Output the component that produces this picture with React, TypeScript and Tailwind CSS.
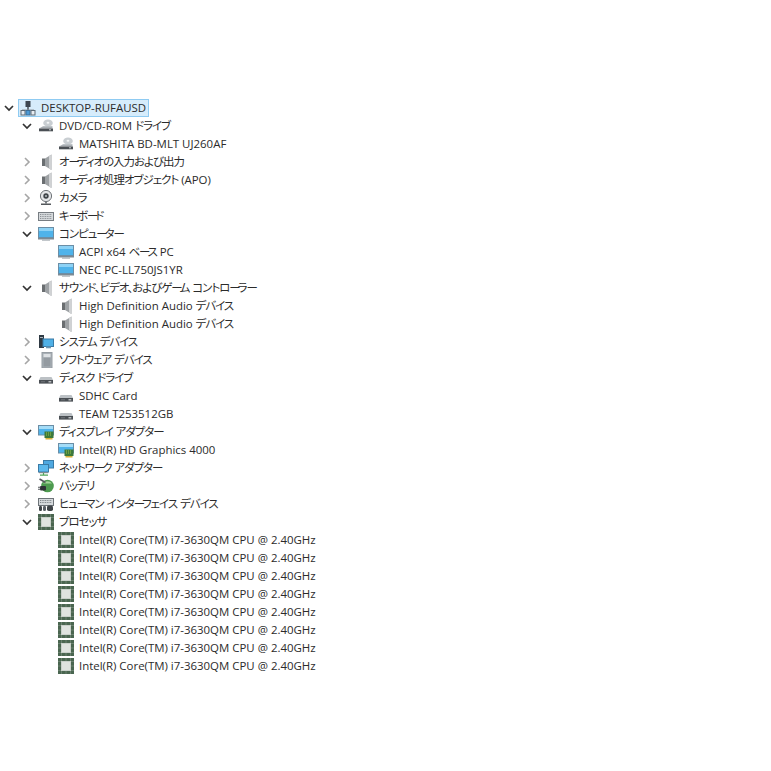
import type { ReactNode } from "react";

type IconName =
  | "computer"
  | "dvd"
  | "speaker"
  | "camera"
  | "keyboard"
  | "monitor"
  | "system"
  | "tower"
  | "disk"
  | "display"
  | "network"
  | "battery"
  | "hid"
  | "cpu";

type Row = {
  label: string;
  level: 0 | 1 | 2;
  icon: IconName;
  chevron?: "open" | "closed";
};

const cpuName = "Intel(R) Core(TM) i7-3630QM CPU @ 2.40GHz";

const rows: Row[] = [
  { label: "DVD/CD-ROM ドライブ", level: 1, icon: "dvd", chevron: "open" },
  { label: "MATSHITA BD-MLT UJ260AF", level: 2, icon: "dvd" },
  { label: "オーディオの入力および出力", level: 1, icon: "speaker", chevron: "closed" },
  { label: "オーディオ処理オブジェクト (APO)", level: 1, icon: "speaker", chevron: "closed" },
  { label: "カメラ", level: 1, icon: "camera", chevron: "closed" },
  { label: "キーボード", level: 1, icon: "keyboard", chevron: "closed" },
  { label: "コンピューター", level: 1, icon: "monitor", chevron: "open" },
  { label: "ACPI x64 ベース PC", level: 2, icon: "monitor" },
  { label: "NEC PC-LL750JS1YR", level: 2, icon: "monitor" },
  { label: "サウンド、ビデオ、およびゲーム コントローラー", level: 1, icon: "speaker", chevron: "open" },
  { label: "High Definition Audio デバイス", level: 2, icon: "speaker" },
  { label: "High Definition Audio デバイス", level: 2, icon: "speaker" },
  { label: "システム デバイス", level: 1, icon: "system", chevron: "closed" },
  { label: "ソフトウェア デバイス", level: 1, icon: "tower", chevron: "closed" },
  { label: "ディスク ドライブ", level: 1, icon: "disk", chevron: "open" },
  { label: "SDHC Card", level: 2, icon: "disk" },
  { label: "TEAM T253512GB", level: 2, icon: "disk" },
  { label: "ディスプレイ アダプター", level: 1, icon: "display", chevron: "open" },
  { label: "Intel(R) HD Graphics 4000", level: 2, icon: "display" },
  { label: "ネットワーク アダプター", level: 1, icon: "network", chevron: "closed" },
  { label: "バッテリ", level: 1, icon: "battery", chevron: "closed" },
  { label: "ヒューマン インターフェイス デバイス", level: 1, icon: "hid", chevron: "closed" },
  { label: "プロセッサ", level: 1, icon: "cpu", chevron: "open" },
  ...Array.from({ length: 8 }, (): Row => ({ label: cpuName, level: 2, icon: "cpu" })),
];

const glyphs: Record<IconName, ReactNode> = {
  computer: (
    <>
      <rect x="5.5" y="1" width="5" height="6" fill="#3d4650" />
      <rect x="7" y="7" width="2" height="3" fill="#6b7680" />
      <rect x="2" y="9.5" width="12" height="1.2" fill="#8d969e" />
      <rect x="1" y="10.5" width="4" height="4.5" fill="#e8edf2" stroke="#5d6a76" strokeWidth="1" />
      <rect x="6" y="10.5" width="4" height="4.5" fill="#4d9ad6" stroke="#3a6f9a" strokeWidth="1" />
      <rect x="11" y="10.5" width="4" height="4.5" fill="#e8edf2" stroke="#5d6a76" strokeWidth="1" />
    </>
  ),
  dvd: (
    <>
      <ellipse cx="10" cy="5" rx="4.8" ry="3.6" fill="#c9ced2" />
      <ellipse cx="10" cy="4.8" rx="1.4" ry="1" fill="#f4f6f7" />
      <path d="M1 10.5 L5 8.2 H14.5 V10.5 Z" fill="#a9afb4" />
      <rect x="1" y="10.5" width="14" height="2.8" fill="#4a4f54" />
      <rect x="11" y="11.3" width="2" height="1" fill="#c8ccd0" />
    </>
  ),
  speaker: (
    <>
      <rect x="4" y="4.5" width="3.2" height="7.5" fill="#6a6e71" />
      <path d="M7 4.5 L13.5 0.5 V16 L7 12 Z" fill="#9ea2a5" />
      <path d="M11 2 L13.5 0.5 V16 L11 14.5 Z" fill="#d0d2d4" />
    </>
  ),
  camera: (
    <>
      <circle cx="8" cy="6" r="5.6" fill="#e3e5e7" stroke="#6f7478" strokeWidth="1" />
      <circle cx="8" cy="6" r="2.7" fill="#3f4448" />
      <circle cx="8" cy="6" r="1" fill="#b6bcc0" />
      <path d="M7 11.5 H9 V13.5 H7 Z" fill="#7a7f83" />
      <rect x="3" y="13.5" width="10" height="1.5" fill="#54585c" />
    </>
  ),
  keyboard: (
    <>
      <rect x="0.5" y="4.5" width="15" height="8" fill="#d5d9dc" stroke="#777d82" strokeWidth="1" />
      <path d="M2 6.5 H14 M2 8.5 H14 M2 10.5 H14" stroke="#8b9095" strokeWidth="1" strokeDasharray="1 0.7" />
    </>
  ),
  monitor: (
    <>
      <rect x="0.5" y="1.5" width="15" height="10" fill="#4fb3ea" stroke="#6b8ea6" strokeWidth="1" />
      <rect x="1" y="2" width="14" height="3" fill="#8dd2f5" />
      <rect x="0" y="12" width="16" height="1.5" fill="#7d8a93" />
      <rect x="4" y="13.5" width="8" height="1.2" fill="#a8b0b6" />
    </>
  ),
  system: (
    <>
      <rect x="1" y="1" width="5" height="13" fill="#2f3a44" />
      <rect x="2" y="3" width="3" height="1" fill="#a7b2ba" />
      <rect x="5" y="5" width="10.5" height="7.5" fill="#4fb0e6" stroke="#3a7ba6" strokeWidth="1" />
      <rect x="8" y="12.5" width="5" height="1.8" fill="#6b97b3" />
    </>
  ),
  tower: (
    <>
      <rect x="4" y="0.5" width="10" height="15.5" fill="#a9b0b6" stroke="#969da3" strokeWidth="1" />
      <rect x="5.5" y="2" width="7" height="3" fill="#dde1e4" />
      <rect x="5.5" y="6" width="7" height="8.5" fill="#949ba1" />
    </>
  ),
  disk: (
    <>
      <path d="M2.5 7 H13.5 L15 10 H1 Z" fill="#bcc1c5" />
      <rect x="1" y="10" width="14" height="3.6" fill="#4a4f54" />
      <rect x="10.5" y="11.2" width="2.8" height="1.2" fill="#d2d5d8" />
      <rect x="3" y="11.4" width="4" height="0.8" fill="#777c81" />
    </>
  ),
  display: (
    <>
      <rect x="0.5" y="1.5" width="15" height="9.5" fill="#4fb3ea" stroke="#6b8ea6" strokeWidth="1" />
      <rect x="1" y="2" width="14" height="3" fill="#a4dcf7" />
      <rect x="6.5" y="7.5" width="9" height="6.5" fill="#3d7a3a" />
      <path d="M8 9 H14 M8 11 H14" stroke="#9cc24a" strokeWidth="1" strokeDasharray="1 1" />
      <rect x="7.5" y="14" width="7" height="1.5" fill="#d8b23a" />
    </>
  ),
  network: (
    <>
      <rect x="5.5" y="0.5" width="10" height="7.5" fill="#4fa8e0" stroke="#3a7ba6" strokeWidth="1" />
      <rect x="0.5" y="4.5" width="10" height="7.5" fill="#5cb8ec" stroke="#3a7ba6" strokeWidth="1" />
      <rect x="1" y="12" width="9" height="1.2" fill="#7d8a93" />
      <path d="M5.5 13 V15 M2 15.2 H10" stroke="#4fa65a" strokeWidth="1.2" />
    </>
  ),
  battery: (
    <>
      <circle cx="9.5" cy="8" r="6.3" fill="#4d9a4f" />
      <path d="M5 5.5 A5.5 5.5 0 0 1 14 5.5 Z" fill="#a4d49a" />
      <path d="M1.5 1 L7.5 4.5" stroke="#55595d" strokeWidth="1.5" />
      <rect x="2" y="8" width="6" height="4.5" rx="1" fill="#2e3236" />
      <path d="M0 9.2 H2.5 M0 11.3 H2.5" stroke="#55595d" strokeWidth="1.1" />
    </>
  ),
  hid: (
    <>
      <rect x="0.5" y="2.5" width="15" height="7" fill="#d5d9dc" stroke="#6d7378" strokeWidth="1" />
      <path d="M2 4.5 H14 M2 6.5 H14" stroke="#7e8489" strokeWidth="1" strokeDasharray="1 0.7" />
      <rect x="1" y="10" width="3" height="5" rx="1.2" fill="#3f4448" />
      <rect x="5" y="10" width="3" height="5" rx="1.2" fill="#5a6066" />
      <rect x="9" y="9.5" width="6" height="5.5" rx="1.8" fill="#3f4448" />
    </>
  ),
  cpu: (
    <>
      <rect x="0" y="0" width="16" height="16" fill="#4a6650" />
      <path d="M0 3.5 H16 M0 8 H16 M0 12.5 H16 M3.5 0 V16 M8 0 V16 M12.5 0 V16" stroke="#7f9484" strokeWidth="0.6" />
      <rect x="3" y="3" width="10" height="10" fill="#c9d0ca" />
      <rect x="4" y="4" width="8" height="8" fill="#dfe3df" />
    </>
  ),
};

function DeviceIcon({ name }: { name: IconName }) {
  return (
    <svg viewBox="0 0 16 16" className="h-4 w-4 shrink-0">
      {glyphs[name]}
    </svg>
  );
}

function Chevron({ kind }: { kind?: "open" | "closed" }) {
  return (
    <span className="flex w-[19px] shrink-0 items-center">
      {kind === "open" && (
        <svg viewBox="0 0 16 16" className="h-4 w-4">
          <path d="M4 6 L8 10 L12 6" fill="none" stroke="#333333" strokeWidth="1.7" />
        </svg>
      )}
      {kind === "closed" && (
        <svg viewBox="0 0 16 16" className="h-4 w-4">
          <path d="M6 4 L10 8 L6 12" fill="none" stroke="#a6a6a6" strokeWidth="1.6" />
        </svg>
      )}
    </span>
  );
}

// the original UI font sets kana much tighter than Noto, long vowel marks most of all
function Label({ text }: { text: string }) {
  const parts = text.match(/ー+|[\u3001-\u30fb\u30fd-\u9fff]+|[^ー\u3001-\u30fb\u30fd-\u9fff]+/g) ?? [];
  return (
    <span className="ml-[5px] whitespace-nowrap">
      {parts.map((part, i) => {
        if (part[0] === "ー") {
          return (
            <span key={i} className="tracking-[-3px]">
              {part}
            </span>
          );
        }
        if (part.charCodeAt(0) >= 0x3001) {
          return (
            <span key={i} className="tracking-[-1px]">
              {part}
            </span>
          );
        }
        return <span key={i}>{part}</span>;
      })}
    </span>
  );
}

function TreeRow({ row }: { row: Row }) {
  const indent = row.level === 1 ? "pl-[19px]" : "pl-[39px]";
  return (
    <li className={`flex h-[18px] items-center ${indent}`}>
      <Chevron kind={row.chevron} />
      <DeviceIcon name={row.icon} />
      <Label text={row.label} />
    </li>
  );
}

export default function App() {
  return (
    <div className="min-h-screen bg-white pt-[99px] text-[11.45px] leading-[18px] text-[#2b2b2b] [font-family:'Open_Sans','Noto_Sans_CJK_JP',sans-serif] [font-feature-settings:'palt']">
      <div className="flex h-[18px] items-center pl-px">
        <Chevron kind="open" />
        <div className="-ml-[2px] flex h-[18px] items-center border border-[#8fcbf2] bg-[#d6ecfb] pl-px pr-[2px]">
          <DeviceIcon name="computer" />
          <Label text="DESKTOP-RUFAUSD" />
        </div>
      </div>
      <ul>
        {rows.map((row, i) => (
          <TreeRow key={i} row={row} />
        ))}
      </ul>
    </div>
  );
}
